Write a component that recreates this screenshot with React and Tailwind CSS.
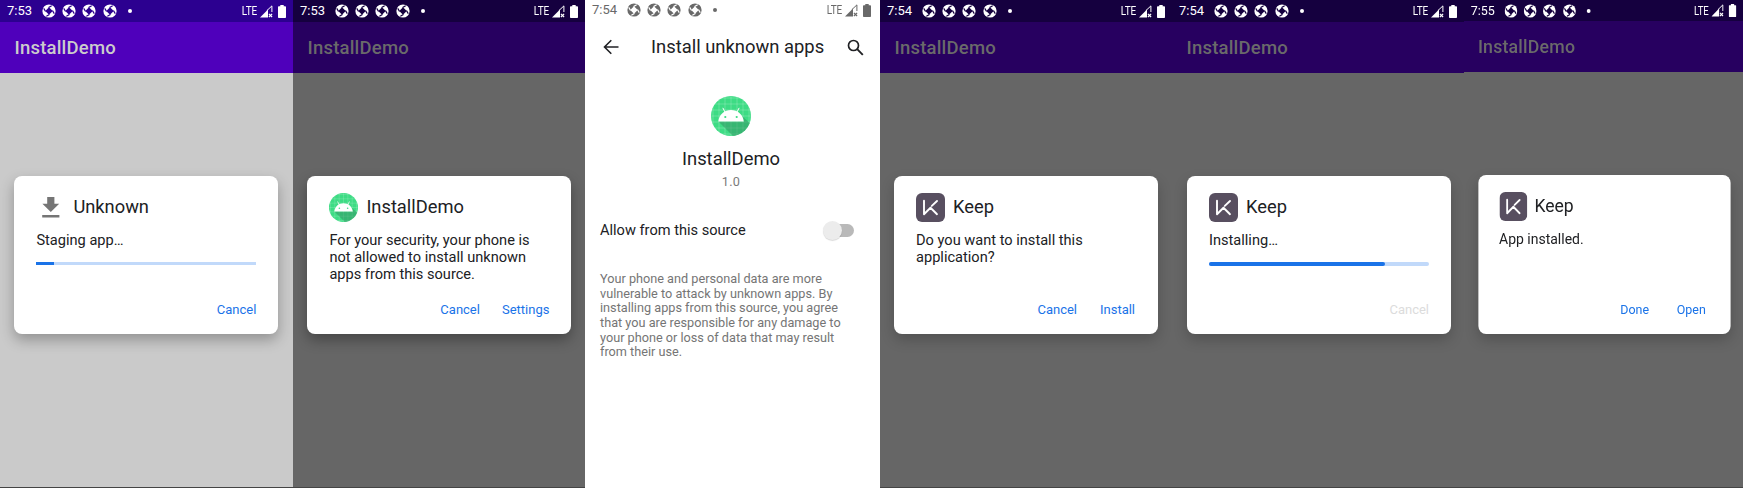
import React from "react";

const ShutterIcon = () => (
  <svg viewBox="0 0 28 28" className="h-3.5 w-3.5 shrink-0">
    <mask id="shutter">
      <circle cx="14" cy="14" r="13.200" fill="#fff" />
      <path d="M14 6.500L21.500 14L14 21.500L6.500 14z" fill="#000" />
      <path
        d="M14 6.500L18.500 4M21.500 14L24 18.500M14 21.500L9.500 24M6.500 14L4 9.500"
        stroke="#000"
        strokeWidth="2.600"
        strokeLinecap="round"
      />
    </mask>
    <rect width="28" height="28" fill="currentColor" mask="url(#shutter)" />
  </svg>
);

const SignalIcon = () => (
  <svg viewBox="0 0 13 13" className="h-[13px] w-[13px]" fill="currentColor">
    <path d="M0 12.500L8 4.500V12.500z" />
    <path d="M6.800 5.700L11.900 0.900V7" fill="none" stroke="currentColor" strokeWidth="1" />
    <path d="M8.900 8.800l3.200 3.200m0-3.200l-3.200 3.200" fill="none" stroke="currentColor" strokeWidth="1.200" />
  </svg>
);

const BatteryIcon = () => (
  <svg viewBox="0 0 8 13" className="h-[13px] w-2" fill="currentColor">
    <path d="M2.300 0h3.400v1.300H7.200a.8.800 0 0 1 .8.800v10.100a.8.800 0 0 1-.8.800H.8a.8.800 0 0 1-.8-.8V2.100a.8.800 0 0 1 .8-.8h1.500z" />
  </svg>
);

const AndroidIcon = ({ className }) => (
  <svg viewBox="0 0 40 40" className={className}>
    <defs>
      <clipPath id="disc">
        <circle cx="20" cy="20" r="20" />
      </clipPath>
    </defs>
    <g clipPath="url(#disc)">
      <rect width="40" height="40" fill="#3ddc84" />
      <path
        d="M2 0v40M8 0v40M14 0v40M20 0v40M26 0v40M32 0v40M38 0v40M0 2h40M0 8h40M0 14h40M0 20h40M0 26h40M0 32h40M0 38h40"
        stroke="#fff"
        strokeOpacity=".3"
        strokeWidth=".7"
      />
      <path d="M7.500 25.500H33L31 20l14 13v12H27z" fill="#2f8f5f" fillOpacity=".5" />
    </g>
    <path d="M7.300 25.500C8 18.500 13.200 14 20 14s12 4.500 12.700 11.500z" fill="#fff" />
    <path d="M14.200 16.500l-2.200-4.300M25.800 16.500l2.200-4.300" stroke="#fff" strokeWidth="1" strokeLinecap="round" />
    <circle cx="14.300" cy="21" r="1.100" fill="#3ddc84" />
    <circle cx="25.700" cy="21" r="1.100" fill="#3ddc84" />
  </svg>
);

const KeepIcon = ({ className }) => (
  <svg viewBox="0 0 29 29" className={className}>
    <rect width="29" height="29" rx="6" fill="#584f60" />
    <path
      d="M8 7.800V21.200L14.500 14.800M21 8l-5.200 4.900M14.500 14.800L21 21.200"
      fill="none"
      stroke="#fff"
      strokeWidth="1.900"
      strokeLinecap="round"
      strokeLinejoin="round"
    />
  </svg>
);

const DownloadIcon = ({ className }) => (
  <svg viewBox="0 0 29 29" className={className} fill="#757575">
    <path d="M11.200 4h7.200v6.800h4.800l-8.400 8.300-8.400-8.300h4.800zM6.200 22h17.200v2.500H6.200z" />
  </svg>
);

const StatusBar = ({ time, className }) => (
  <div className={`flex shrink-0 items-center pl-[7px] pr-[7px] ${className}`}>
    <span className="w-[35px] text-[13px] leading-[22px]">{time}</span>
    <div className="flex items-center gap-[6.2px]">
      <ShutterIcon />
      <ShutterIcon />
      <ShutterIcon />
      <ShutterIcon />
    </div>
    <span className="ml-[11px] h-1 w-1 rounded-full bg-current" />
    <span className="ml-auto mr-[3px] origin-right scale-x-[0.8] text-[12.500px] leading-[20px] tracking-[-0.2px]">
      LTE
    </span>
    <SignalIcon />
    <span className="ml-[5px] flex">
      <BatteryIcon />
    </span>
  </div>
);

const Dialog = ({ icon, title, message, progress, rounded, actions, muted, className }) => (
  <section
    className={`mr-auto flex shrink-0 flex-col rounded-[8px] bg-white px-[22px] pb-[14.400px] text-[#202124] ${className}`}
  >
    <div className="flex h-[29px] items-center gap-2">
      {icon}
      <h2 className="pb-px text-[18.300px] leading-[28px]">{title}</h2>
    </div>
    <p className="mt-[10px] whitespace-pre text-[14.600px] leading-[17px]">{message}</p>
    {progress && (
      <div className={`mt-[13px] bg-[#c1d9fa] ${rounded ? "h-1 rounded-full" : "h-[3px]"}`}>
        <div
          className={`h-full bg-[#1a73e8] ${rounded ? "rounded-full" : ""}`}
          style={{ width: `${progress}%` }}
        />
      </div>
    )}
    <div className="mt-auto flex justify-end gap-[22px]">
      {actions.map((label) => (
        <button
          key={label}
          className={`min-w-[37px] text-center text-[13px] leading-5 ${muted ? "text-[#dcdcdc]" : "text-[#1a73e8]"}`}
        >
          {label}
        </button>
      ))}
    </div>
  </section>
);

const AppPanel = ({ time, light, short, className, children }) => (
  <div
    className={`flex h-[488px] flex-col border-b border-[#444444] ${light ? "bg-[#cacaca]" : "bg-[#666666]"} ${className}`}
  >
    <StatusBar
      time={time}
      className={`text-white ${short ? "h-[21px]" : "h-[22px]"} ${light ? "bg-[#2c0090]" : "bg-[#15003f]"}`}
    />
    <header
      className={`flex h-[51px] shrink-0 items-center px-[14.500px] pt-[2px] text-[18.500px] font-medium tracking-[0.2px] ${
        light ? "bg-[#4f00bb] text-[#cccccc]" : "bg-[#270060] text-[#6a6a6a]"
      }`}
    >
      InstallDemo
    </header>
    {children}
  </div>
);

const icon29 = "h-[29px] w-[29px] shrink-0";

export default function App() {
  return (
    <main className="flex h-[489px] w-[1743px] overflow-hidden bg-white font-['Roboto',sans-serif]">
      <AppPanel time="7:53" light className="w-[293px]">
        <Dialog
          className="ml-[14.400px] mt-[102.500px] h-[158.400px] w-[264px] pt-[17px] shadow-[0_6px_14px_rgba(0,0,0,0.28)]"
          icon={<DownloadIcon className={icon29} />}
          title="Unknown"
          message="Staging app…"
          progress={8}
          actions={["Cancel"]}
        />
      </AppPanel>

      <AppPanel time="7:53" className="w-[292px]">
        <Dialog
          className="ml-[14.400px] mt-[102.500px] h-[158.400px] w-[264px] pt-[17px] shadow-[0_6px_14px_rgba(0,0,0,0.32)]"
          icon={<AndroidIcon className={icon29} />}
          title="InstallDemo"
          message={"For your security, your phone is\nnot allowed to install unknown\napps from this source."}
          actions={["Cancel", "Settings"]}
        />
      </AppPanel>

      <div className="flex w-[295px] flex-col bg-white text-[#202124]">
        <StatusBar time="7:54" className="h-5 pr-[9px] text-[#696969]" />
        <header className="flex h-[54px] items-center pl-[18px] pr-4">
          <svg viewBox="0 0 16 16" className="h-4 w-4" fill="none" stroke="currentColor" strokeWidth="1.600">
            <path d="M15.500 8H2M8.300 1.200L1.500 8l6.800 6.800" />
          </svg>
          <h1 className="ml-[32px] text-[18.400px] leading-6">Install unknown apps</h1>
          <svg viewBox="0 0 17 17" className="ml-auto h-[17px] w-[17px]" fill="none" stroke="currentColor">
            <circle cx="6.500" cy="6.500" r="5" strokeWidth="1.700" />
            <path d="M10.200 10.200l5.600 5.600" strokeWidth="1.900" />
          </svg>
        </header>
        <div className="flex flex-col items-center pr-[3px] pt-[22px]">
          <AndroidIcon className="h-10 w-10" />
          <h2 className="mt-[11px] text-[18.400px] leading-6">InstallDemo</h2>
          <p className="mt-[3px] text-[12.700px] leading-4 tracking-[0.3px] text-[#7a7a7a]">1.0</p>
        </div>
        <div className="mt-[29px] flex h-[22px] items-center justify-between pl-[15px] pr-[26px]">
          <span className="text-[14.600px] leading-[22px]">Allow from this source</span>
          <span className="flex h-[13px] w-[30px] items-center rounded-full bg-[#b9b9b9]">
            <span className="-ml-px h-[19px] w-[19px] shrink-0 rounded-full bg-[#ececec] shadow-[0_1px_1px_rgba(0,0,0,0.15)]" />
          </span>
        </div>
        <p className="mt-[31px] whitespace-pre pl-[15px] text-[12.700px] leading-[14.650px] text-[#757575]">
          {"Your phone and personal data are more\nvulnerable to attack by unknown apps. By\ninstalling apps from this source, you agree\nthat you are responsible for any damage to\nyour phone or loss of data that may result\nfrom their use."}
        </p>
      </div>

      <AppPanel time="7:54" className="w-[292px]">
        <Dialog
          className="ml-[14px] mt-[102.500px] h-[158.400px] w-[264px] pt-[17px] shadow-[0_6px_14px_rgba(0,0,0,0.2)]"
          icon={<KeepIcon className={icon29} />}
          title="Keep"
          message={"Do you want to install this\napplication?"}
          actions={["Cancel", "Install"]}
        />
      </AppPanel>

      <AppPanel time="7:54" className="w-[292px]">
        <Dialog
          className="ml-[15px] mt-[102.500px] h-[158.400px] w-[264px] pt-[17px] shadow-[0_6px_14px_rgba(0,0,0,0.2)]"
          icon={<KeepIcon className={icon29} />}
          title="Keep"
          message="Installing…"
          progress={80}
          rounded
          muted
          actions={["Cancel"]}
        />
      </AppPanel>

      <div className="w-[279px]">
        <AppPanel time="7:55" short className="w-[291px] origin-left scale-x-[0.959]">
          <Dialog
            className="ml-[14.500px] mt-[103px] h-[159px] w-[263px] pt-[17px] shadow-[0_6px_14px_rgba(0,0,0,0.2)]"
            icon={<KeepIcon className={icon29} />}
            title="Keep"
            message="App installed."
            actions={["Done", "Open"]}
          />
        </AppPanel>
      </div>
    </main>
  );
}
